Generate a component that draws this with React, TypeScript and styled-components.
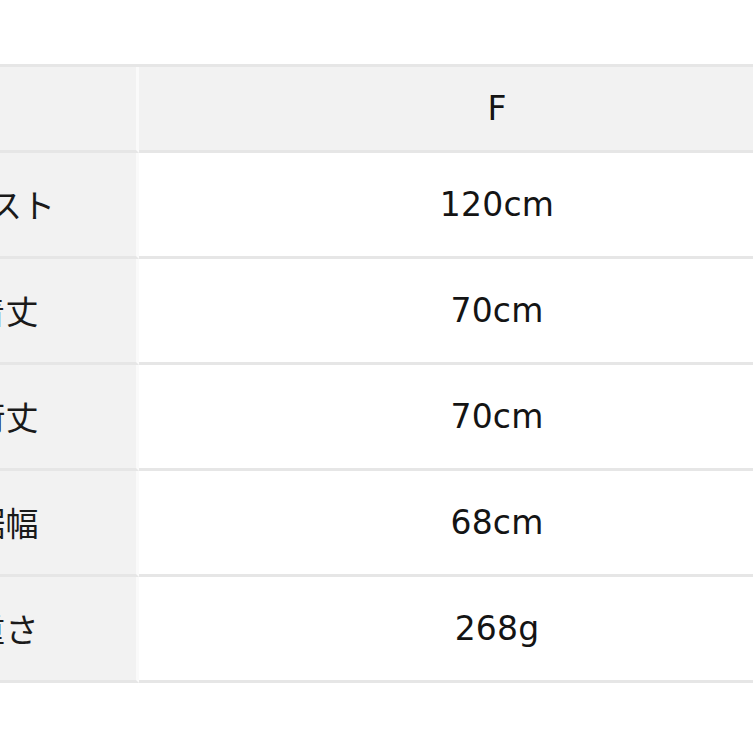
import React from "react";
import styled, { createGlobalStyle } from "styled-components";

const Global = createGlobalStyle`
  html, body {
    margin: 0;
    padding: 0;
    background: #ffffff;
    overflow: hidden;
  }
  body {
    font-family: "DejaVu Sans", "Noto Sans CJK JP", sans-serif;
    color: #161616;
  }
`;

const Page = styled.div`
  width: 753px;
  height: 753px;
  padding-top: 64px;
  box-sizing: border-box;
  overflow: hidden;
`;

const Table = styled.div`
  display: grid;
  grid-template-columns: 264px 716px;
  margin-left: -125px;
  width: 980px;
  border-top: 3px solid #e6e6e6;
`;

const Cell = styled.div<{ $head?: boolean; $label?: boolean }>`
  display: flex;
  align-items: center;
  justify-content: center;
  box-sizing: border-box;
  height: ${(p) => (p.$head ? 86 : 106)}px;
  border-bottom: 3px solid #e6e6e6;
  background: ${(p) => (p.$head || p.$label ? "#f2f2f2" : "#ffffff")};
  border-right: ${(p) => (p.$label ? "3px solid #fafafa" : "none")};
  font-size: 33px;
  font-weight: 400;
  line-height: 1;
  letter-spacing: 0.2px;
  color: #141414;
`;

const LabelText = styled.span`
  font-family: "Noto Sans CJK JP", sans-serif;
  font-weight: 400;
  font-size: 33px;
  color: #1a1a1a;
`;

const rows: [string, string][] = [
  ["バスト", "120cm"],
  ["着丈", "70cm"],
  ["裄丈", "70cm"],
  ["裾幅", "68cm"],
  ["重さ", "268g"],
];

export default function App() {
  return (
    <>
      <Global />
      <Page>
        <Table>
          <Cell $head $label />
          <Cell $head>F</Cell>
          {rows.map(([label, value]) => (
            <React.Fragment key={label}>
              <Cell $label>
                <LabelText>{label}</LabelText>
              </Cell>
              <Cell>{value}</Cell>
            </React.Fragment>
          ))}
        </Table>
      </Page>
    </>
  );
}
